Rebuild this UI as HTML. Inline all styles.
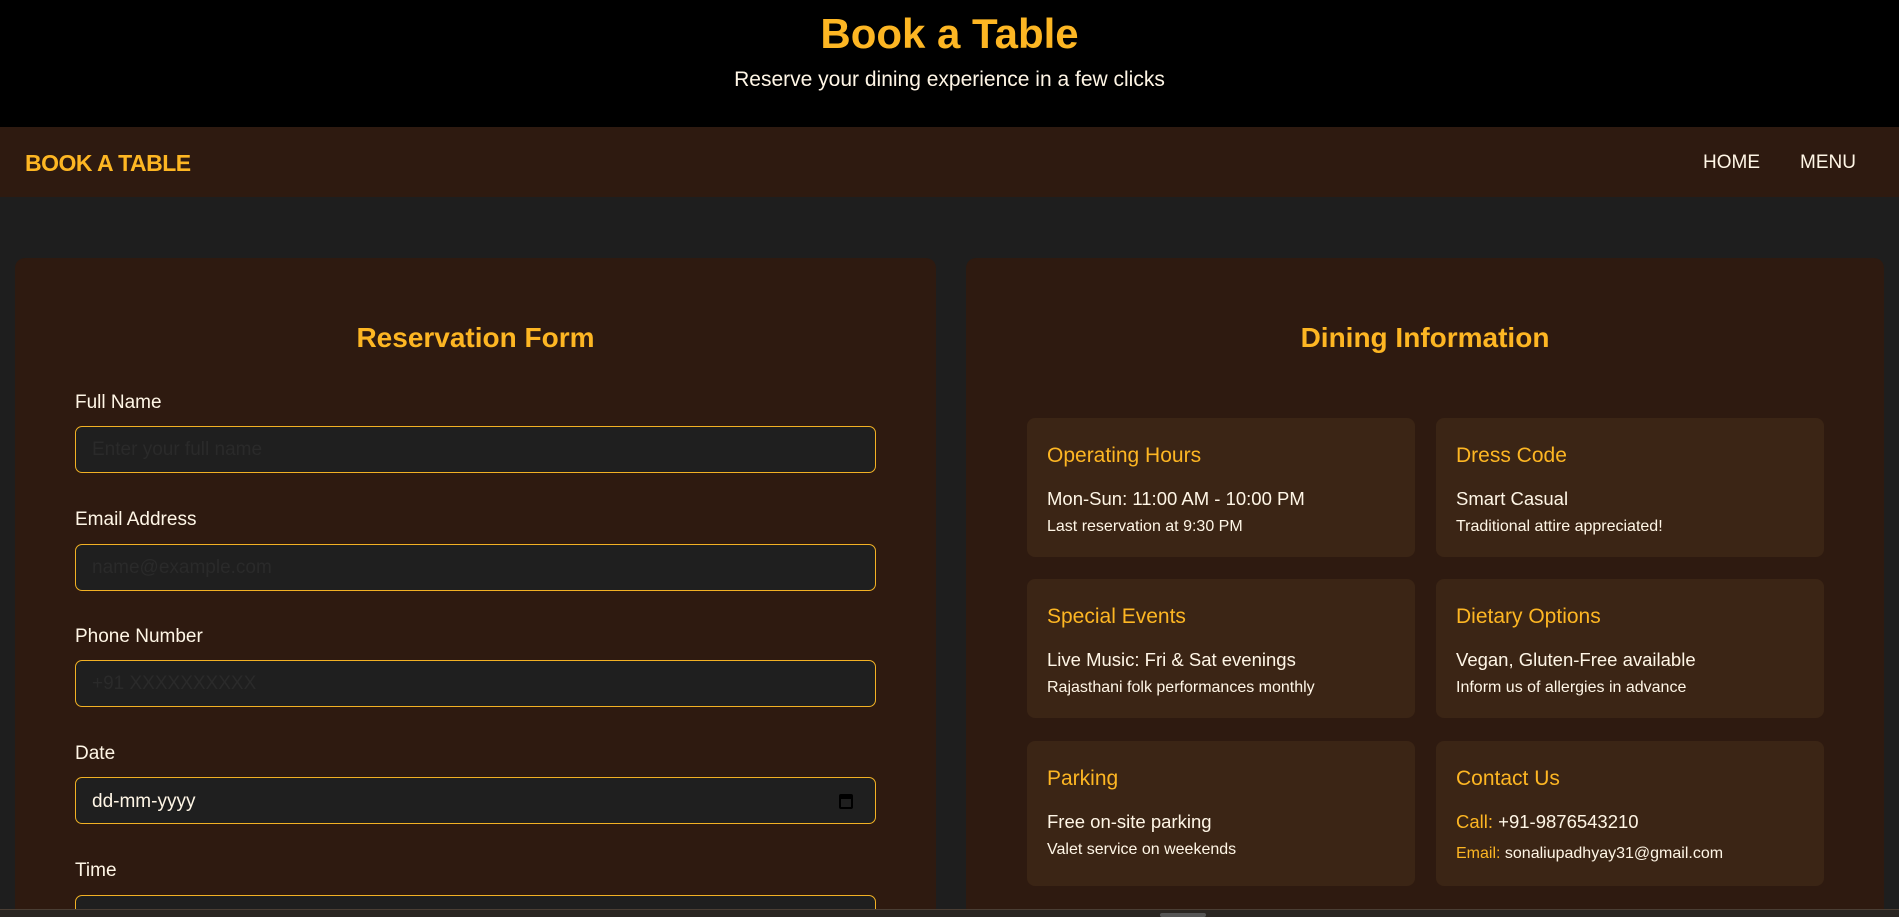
<!DOCTYPE html>
<html><head><meta charset="utf-8"><style>
*{box-sizing:border-box;margin:0;padding:0}
html,body{width:1899px;height:917px;overflow:hidden}
body{background:#1e1e1e;font-family:"Liberation Sans",sans-serif;color:#fff6e6;position:relative}
.a{position:absolute;white-space:nowrap}
.hdr{left:0;top:0;width:1899px;height:127px;background:#000}
.nav{left:0;top:127px;width:1899px;height:70px;background:#2e1a10}
.y{color:#fdb623}
.panel{top:258px;height:660px;background:#2e1a10;border-radius:10px}
.lbl{font-size:19px;left:75px}
.inp{left:75px;width:801px;height:47px;border:1.5px solid #f2b124;border-radius:7px;background:#1f1f1f}
.ph{font-size:19px;color:#2a2a2a;left:16px;top:12px}
.card{background:#3b2515;border-radius:8px;width:388px}
.card .t{position:absolute;left:20px;top:26px;font-size:21px;color:#fdb623}
.card .l1{position:absolute;left:20px;top:70px;font-size:18.5px}
.card .l2{position:absolute;left:20px;top:100px;font-size:16px}
</style></head><body>
<div class="a hdr"></div>
<div class="a y" style="left:0;width:1899px;text-align:center;top:10px;font-size:42px;font-weight:bold">Book a Table</div>
<div class="a" style="left:0;width:1899px;text-align:center;top:68px;font-size:21px">Reserve your dining experience in a few clicks</div>
<div class="a nav"></div>
<div class="a y" style="left:25px;top:150px;font-size:23px;font-weight:bold;letter-spacing:-0.5px">BOOK A TABLE</div>
<div class="a" style="left:1703px;top:152px;font-size:19px">HOME</div>
<div class="a" style="left:1800px;top:152px;font-size:19px">MENU</div>

<div class="a panel" style="left:15px;width:921px"></div>
<div class="a panel" style="left:966px;width:918px"></div>

<div class="a y" style="left:15px;width:921px;text-align:center;top:322px;font-size:28px;font-weight:bold">Reservation Form</div>
<div class="a y" style="left:966px;width:918px;text-align:center;top:322px;font-size:28px;font-weight:bold">Dining Information</div>

<div class="a lbl" style="top:392px">Full Name</div>
<div class="a inp" style="top:426px"><span class="a ph">Enter your full name</span></div>
<div class="a lbl" style="top:509px">Email Address</div>
<div class="a inp" style="top:544px"><span class="a ph">name@example.com</span></div>
<div class="a lbl" style="top:626px">Phone Number</div>
<div class="a inp" style="top:660px"><span class="a ph">+91 XXXXXXXXXX</span></div>
<div class="a lbl" style="top:743px">Date</div>
<div class="a inp" style="top:777px"><span class="a ph" style="color:#fff6e6;top:13px">dd-mm-yyyy</span>
<svg class="a" style="left:762px;top:14px" width="16" height="18" viewBox="0 0 16 18"><rect x="2" y="3" width="12" height="13" rx="1" fill="none" stroke="#000" stroke-width="2"/><rect x="2" y="3" width="12" height="4" fill="#000"/></svg></div>
<div class="a lbl" style="top:860px">Time</div>
<div class="a inp" style="top:895px"></div>

<div class="a card" style="left:1027px;top:418px;height:139px"><div class="t">Operating Hours</div><div class="l1">Mon-Sun: 11:00 AM - 10:00 PM</div><div class="l2">Last reservation at 9:30 PM</div></div>
<div class="a card" style="left:1436px;top:418px;height:139px"><div class="t">Dress Code</div><div class="l1">Smart Casual</div><div class="l2">Traditional attire appreciated!</div></div>
<div class="a card" style="left:1027px;top:579px;height:139px"><div class="t">Special Events</div><div class="l1">Live Music: Fri &amp; Sat evenings</div><div class="l2">Rajasthani folk performances monthly</div></div>
<div class="a card" style="left:1436px;top:579px;height:139px"><div class="t">Dietary Options</div><div class="l1">Vegan, Gluten-Free available</div><div class="l2">Inform us of allergies in advance</div></div>
<div class="a card" style="left:1027px;top:741px;height:145px"><div class="t">Parking</div><div class="l1">Free on-site parking</div><div class="l2">Valet service on weekends</div></div>
<div class="a card" style="left:1436px;top:741px;height:145px"><div class="t">Contact Us</div><div class="l1"><span class="y">Call:</span> +91-9876543210</div><div class="l2" style="top:104px"><span class="y">Email:</span> sonaliupadhyay31@gmail.com</div></div>

<div class="a" style="left:0;top:909px;width:1899px;height:8px;background:#2a2622;border-top:1px solid #4a3e34;z-index:10"></div>
<div class="a" style="left:1160px;top:913px;width:46px;height:4px;background:#555;border-radius:2px;z-index:11"></div>
</body></html>
